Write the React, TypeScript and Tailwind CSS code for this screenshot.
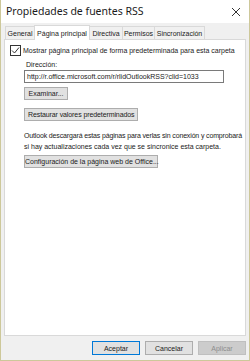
import React from 'react';

export default function App() {
  const tabs = [
    { t: 'General', w: 'w-[30px]' },
    { t: 'Página principal', w: 'w-[56px]' },
    { t: 'Directiva', w: 'w-[34px]' },
    { t: 'Permisos', w: 'w-[33px]' },
    { t: 'Sincronización', w: 'w-[51px]' },
  ];
  return (
    <div className="w-[250px] h-[361px] bg-[#f0f0f0] border border-[#cdc89a] border-t-0 flex flex-col text-[7px] text-[#1a1a1a] font-['Liberation_Sans',Arial,sans-serif] leading-none whitespace-nowrap">
      <div className="h-[23px] bg-white flex items-center justify-between pl-[5px] pr-[8px]">
        <span className="text-[10.5px] font-['Noto_Sans',sans-serif]">Propiedades de fuentes RSS</span>
        <svg width="10" height="10" viewBox="0 0 10 10" className="stroke-[#333]">
          <path d="M1 1L9 9M9 1L1 9" strokeWidth="1" />
        </svg>
      </div>
      <div className="flex items-end pl-[4px] h-[16px]">
        {tabs.map(({ t, w }, i) =>
          i === 1 ? (
            <div key={t} className={`${w} h-[15px] -ml-px bg-white border border-b-0 border-[#d9d9d9] flex items-center justify-center relative z-10 -mb-px`}>
              {t}
            </div>
          ) : (
            <div key={t} className={`${w} h-[13px] border border-b-0 border-[#d9d9d9] flex items-center justify-center ${i === 0 ? '' : '-ml-px'}`}>
              {t}
            </div>
          )
        )}
      </div>
      <div className="mx-[3px] bg-white border border-[#d9d9d9] h-[297px] flex flex-col pt-[5px] pl-[5px]">
        <label className="flex items-center gap-[2px]">
          <span className="w-[11px] h-[11px] border border-[#333] flex items-center justify-center bg-white">
            <svg width="9" height="9" viewBox="0 0 9 9">
              <path d="M1 4.5L3.5 7L8 1.5" fill="none" stroke="#333" strokeWidth="1" />
            </svg>
          </span>
          <span>Mostrar página principal de forma predeterminada para esta carpeta</span>
        </label>
        <div className="pl-[14px] flex flex-col">
          <span className="mt-[5px] pl-[2px]">Dirección:</span>
          <div className="mt-[2px] w-[200px] h-[13px] border border-[#7a7a7a] flex items-center px-[2px]">
            http://r.office.microsoft.com/r/rlidOutlookRSS?clid=1033
          </div>
          <div className="mt-[4px] flex">
            <button className="h-[13px] w-[44px] bg-[#e1e1e1] border border-[#adadad] leading-none">Examinar...</button>
          </div>
          <div className="mt-[8px] flex">
            <button className="h-[13px] px-[3px] bg-[#e1e1e1] border border-[#adadad] leading-none tracking-[-0.1px]">Restaurar valores predeterminados</button>
          </div>
          <p className="mt-[9px] leading-[11px]">
            <span className="tracking-[-0.15px]">Outlook descargará estas páginas para verlas sin conexión y comprobará</span>
            <br />
            si hay actualizaciones cada vez que se sincronice esta carpeta.
          </p>
          <div className="mt-[3px] flex">
            <button className="h-[13px] w-[134px] bg-[#e1e1e1] border border-[#adadad] leading-none">Configuración de la página web de Office...</button>
          </div>
        </div>
      </div>
      <div className="flex justify-end gap-[5px] pr-[3px] mt-[5px]">
        <button className="w-[48px] h-[14px] bg-[#e1e1e1] border border-[#0078d7] leading-none">Aceptar</button>
        <button className="w-[48px] h-[14px] bg-[#e1e1e1] border border-[#adadad] leading-none">Cancelar</button>
        <button className="w-[48px] h-[14px] bg-[#cccccc] border border-[#bfbfbf] text-[#8c8c8c] leading-none">Aplicar</button>
      </div>
    </div>
  );
}
